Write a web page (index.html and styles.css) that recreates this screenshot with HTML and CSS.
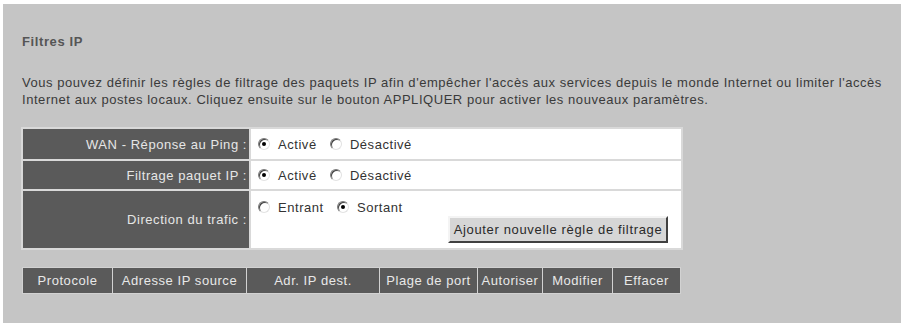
FILE: index.html
```html
<!DOCTYPE html>
<html lang="fr">

<head>
    <meta charset="UTF-8">
    <title>Filtres IP</title>
    <link rel="stylesheet" href="styles.css">
</head>

<body>
    <div class="page">
        <h2 class="title">Filtres IP</h2>
        <p class="intro">Vous pouvez définir les règles de filtrage des paquets IP afin d'empêcher l'accès aux services depuis le monde Internet ou limiter l'accès Internet aux postes locaux. Cliquez ensuite sur le bouton APPLIQUER pour activer les nouveaux paramètres.</p>

        <table class="settings">
            <tr class="row-ping">
                <td class="label">WAN - Réponse au Ping :</td>
                <td class="value">
                    <label><input type="radio" name="ping" checked>Activé</label>
                    <label><input type="radio" name="ping">Désactivé</label>
                </td>
            </tr>
            <tr class="row-filter">
                <td class="label">Filtrage paquet IP :</td>
                <td class="value">
                    <label><input type="radio" name="filter" checked>Activé</label>
                    <label><input type="radio" name="filter">Désactivé</label>
                </td>
            </tr>
            <tr class="row-direction">
                <td class="label">Direction du trafic :</td>
                <td class="value">
                    <div class="radios">
                        <label><input type="radio" name="dir">Entrant</label>
                        <label><input type="radio" name="dir" checked>Sortant</label>
                    </div>
                    <div class="actions">
                        <button class="add-btn">Ajouter nouvelle règle de filtrage</button>
                    </div>
                </td>
            </tr>
        </table>

        <table class="rules">
            <tr>
                <th class="c-proto">Protocole</th>
                <th class="c-src">Adresse IP source</th>
                <th class="c-dst">Adr. IP dest.</th>
                <th class="c-port">Plage de port</th>
                <th class="c-allow">Autoriser</th>
                <th class="c-edit">Modifier</th>
                <th class="c-del">Effacer</th>
            </tr>
        </table>
    </div>
</body>

</html>
```

FILE: styles.css
```css
body {
    margin: 0;
    padding: 0;
    background-color: #ffffff;
    font-family: "Liberation Sans", Arial, sans-serif;
    font-size: 13px;
    letter-spacing: 0.55px;
    color: #3a3a3a;
}

.page {
    margin: 4px 0 0 3px;
    height: 319px;
    padding: 0 0 0 19px;
    background-color: #c5c5c5;
    box-sizing: border-box;
    overflow: hidden;
}

.title {
    margin: 0;
    padding-top: 31px;
    font-size: 13px;
    font-weight: bold;
    letter-spacing: 0.6px;
    color: #555555;
    line-height: 14px;
}

.intro {
    margin: 25px 0 0 0;
    line-height: 17px;
    width: 875px;
}

.settings {
    margin-top: 19px;
    margin-left: -1px;
    width: 662px;
    border-spacing: 2px;
    background-color: #d9d9d9;
}

.settings td {
    padding: 0;
}

.label {
    width: 226px;
    background-color: #5a5a5a;
    color: #e6e6e6;
    text-align: right;
    padding-right: 2px !important;
    box-sizing: border-box;
}

.value {
    background-color: #ffffff;
    padding-left: 7px !important;
    color: #333333;
}

.row-ping td {
    height: 30px;
}

.row-filter td {
    height: 28px;
}

.row-direction td {
    height: 57px;
}

.row-direction .value {
    vertical-align: top;
}

.value label {
    display: inline-block;
    margin-right: 9px;
    vertical-align: middle;
}

.radios {
    padding-top: 8px;
    height: 17px;
}

input[type="radio"] {
    appearance: none;
    -webkit-appearance: none;
    width: 12px;
    height: 12px;
    margin: 0 8px 0 0;
    border: 1px solid;
    border-color: #7a7a7a #e2e2e2 #e2e2e2 #7a7a7a;
    border-radius: 50%;
    background-color: #ffffff;
    box-shadow: inset 1px 1px 0 #404040;
    box-sizing: border-box;
    vertical-align: -1px;
    position: relative;
}

input[type="radio"]:checked::after {
    content: "";
    position: absolute;
    left: 3px;
    top: 3px;
    width: 4px;
    height: 4px;
    border-radius: 50%;
    background-color: #000000;
}

.actions {
    text-align: right;
    padding-right: 13px;
}

.add-btn {
    font-family: "Liberation Sans", Arial, sans-serif;
    font-size: 13px;
    letter-spacing: 0.65px;
    color: #2a2a2a;
    height: 27px;
    width: 220px;
    padding: 0;
    background-color: #d6d6d6;
    border: 2px solid;
    border-color: #f4f4f4 #404040 #404040 #f4f4f4;
}

.rules {
    margin-top: 17px;
    border-spacing: 1px;
    background-color: #d2d2d2;
}

.rules th {
    height: 25px;
    padding: 0;
    background-color: #5a5a5a;
    color: #e8e8e8;
    font-weight: normal;
    text-align: center;
    white-space: nowrap;
}

.c-proto { width: 89px; }
.c-src { width: 133px; }
.c-dst { width: 132px; }
.c-port { width: 97px; }
.c-allow { width: 64px; }
.c-edit { width: 69px; }
.c-del { width: 67px; }
```
